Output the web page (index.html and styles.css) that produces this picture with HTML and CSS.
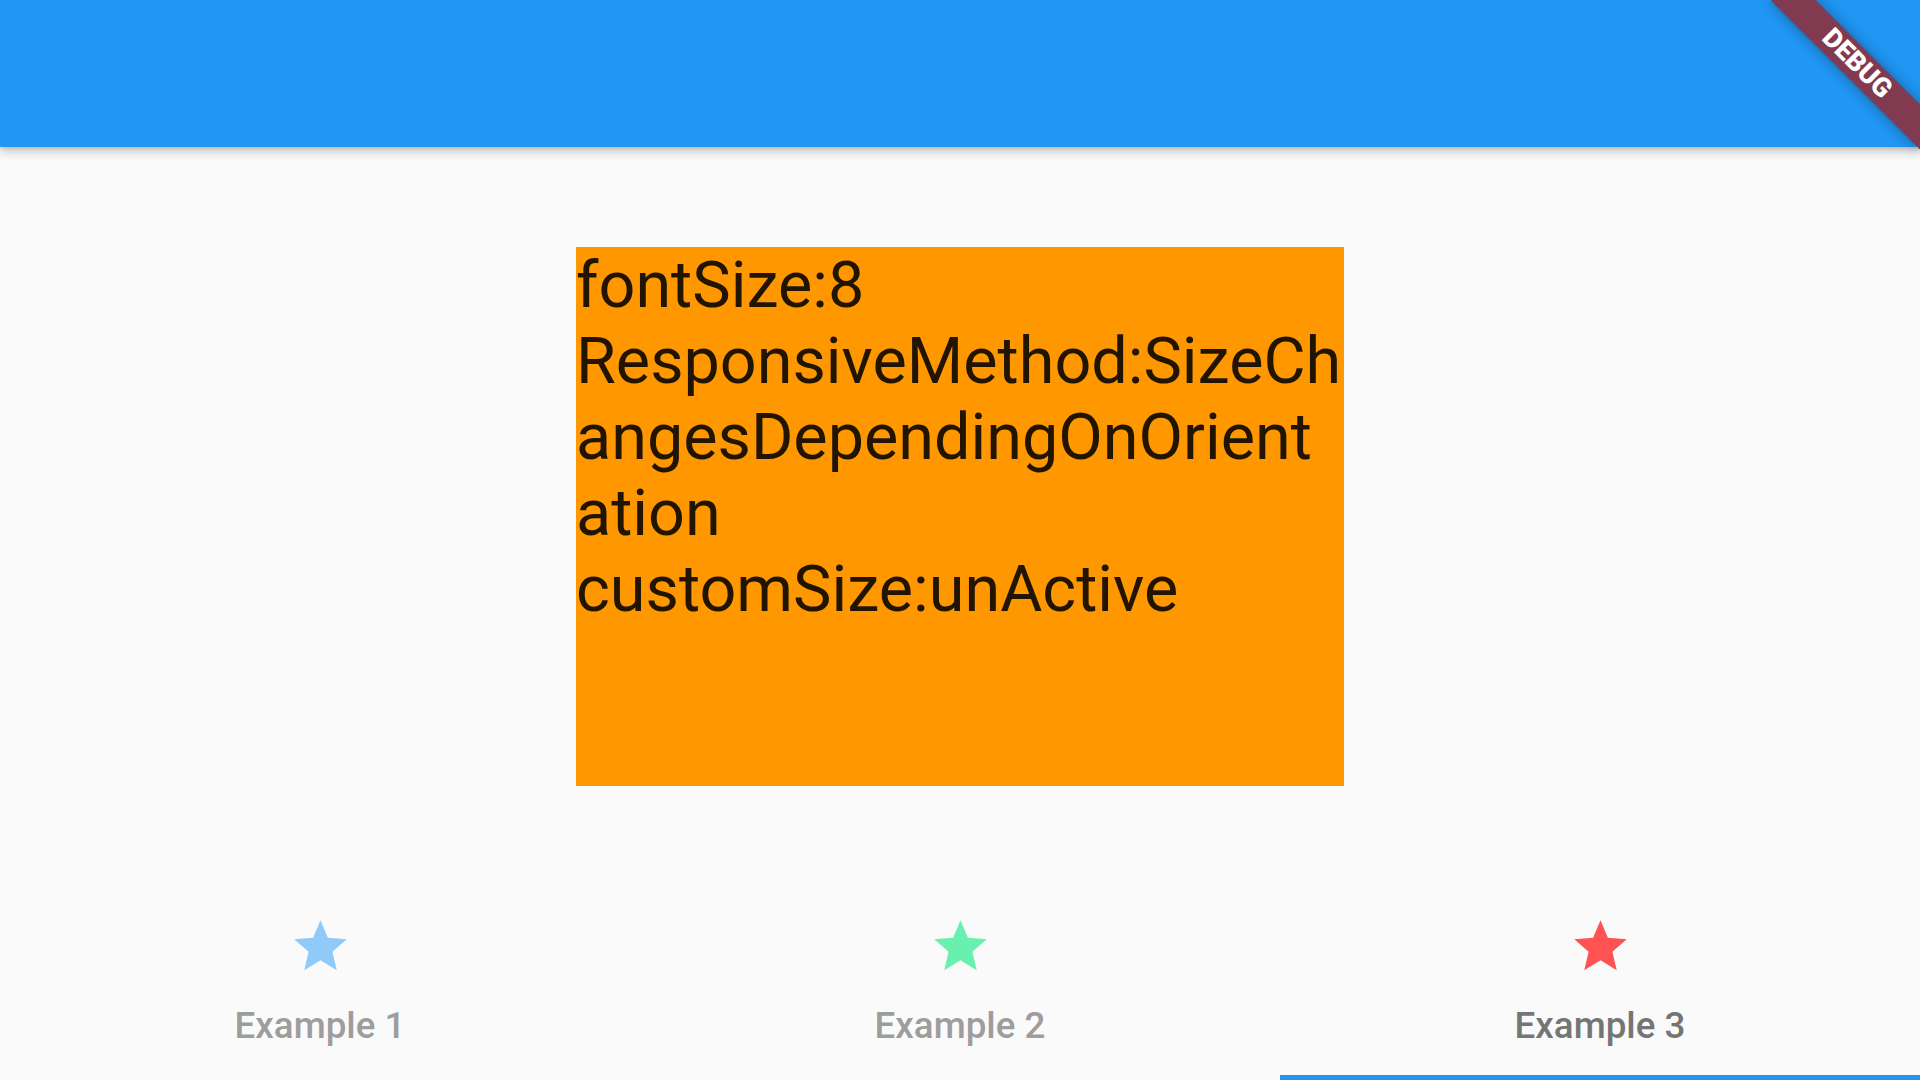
FILE: index.html
```html
<!DOCTYPE html>
<html lang="en">
<head>
<meta charset="utf-8">
<title>Responsive example</title>
<link rel="stylesheet" href="styles.css">
</head>
<body>
<div class="app">
  <header class="appbar"></header>
  <main class="content">
    <div class="box">
      <p class="box-text">fontSize:8<br>ResponsiveMethod:SizeCh<br>angesDependingOnOrient<br>ation<br>customSize:unActive</p>
    </div>
  </main>
  <nav class="tabbar">
    <div class="tab">
      <svg class="star star-blue" viewBox="0 0 24 24" width="63" height="63"><path d="M12 17.27L18.18 21l-1.64-7.03L22 9.24l-7.19-.61L12 2 9.19 8.63 2 9.24l5.46 4.73L5.82 21z"/></svg>
      <span class="tab-label">Example 1</span>
    </div>
    <div class="tab">
      <svg class="star star-green" viewBox="0 0 24 24" width="63" height="63"><path d="M12 17.27L18.18 21l-1.64-7.03L22 9.24l-7.19-.61L12 2 9.19 8.63 2 9.24l5.46 4.73L5.82 21z"/></svg>
      <span class="tab-label">Example 2</span>
    </div>
    <div class="tab tab-active">
      <svg class="star star-red" viewBox="0 0 24 24" width="63" height="63"><path d="M12 17.27L18.18 21l-1.64-7.03L22 9.24l-7.19-.61L12 2 9.19 8.63 2 9.24l5.46 4.73L5.82 21z"/></svg>
      <span class="tab-label">Example 3</span>
    </div>
  </nav>
  <div class="debug-banner"><span>DEBUG</span></div>
</div>
</body>
</html>
```
FILE: styles.css
```css
html, body {
  margin: 0;
  padding: 0;
  width: 1920px;
  height: 1080px;
  overflow: hidden;
  background: #fafafa;
  font-family: Roboto, "Noto Sans", "Liberation Sans", sans-serif;
}

.app {
  position: relative;
  width: 1920px;
  height: 1080px;
  display: flex;
  flex-direction: column;
  overflow: hidden;
}

.appbar {
  height: 147px;
  flex: 0 0 147px;
  background: #2196f3;
  box-shadow: 0 5px 10px rgba(0, 0, 0, 0.18), 0 2px 4px rgba(0, 0, 0, 0.12);
  position: relative;
  z-index: 2;
}

.content {
  flex: 1 1 auto;
  display: flex;
  align-items: center;
  justify-content: center;
}

.box {
  width: 768px;
  height: 539px;
  background: #ff9800;
  display: flex;
  flex-direction: column;
}

.box-text {
  margin: 0;
  font-size: 64.7px;
  line-height: 76px;
  color: rgba(0, 0, 0, 0.87);
  white-space: nowrap;
  font-weight: 400;
}

.tabbar {
  flex: 0 0 194px;
  height: 194px;
  display: flex;
}

.tab {
  flex: 1 1 0;
  display: flex;
  flex-direction: column;
  align-items: center;
  justify-content: center;
  padding-bottom: 5px;
  box-sizing: border-box;
  color: #9d9d9d;
}

.tab-active {
  color: #757575;
  border-bottom: 5px solid #2196f3;
  padding-bottom: 0;
}

.star {
  display: block;
  width: 63px;
  height: 63px;
  margin-bottom: 26px;
}

.star-blue { fill: #90caf9; }
.star-green { fill: #69f0ae; }
.star-red { fill: #ff5252; }

.tab-label {
  font-size: 36.75px;
  line-height: 43px;
  font-weight: 500;
}

.debug-banner {
  position: absolute;
  left: 1815px;
  top: 73.5px;
  width: 210px;
  height: 31.5px;
  transform-origin: 105px -73.5px;
  transform: rotate(45deg);
  background: #823a51;
  box-shadow: 0 0 14px rgba(0, 0, 0, 0.35);
  display: flex;
  align-items: center;
  justify-content: center;
  z-index: 5;
}

.debug-banner span {
  color: #ffffff;
  font-size: 26.8px;
  line-height: 26.8px;
  font-weight: 900;
  font-family: Roboto, "Noto Sans", sans-serif;
}
```
